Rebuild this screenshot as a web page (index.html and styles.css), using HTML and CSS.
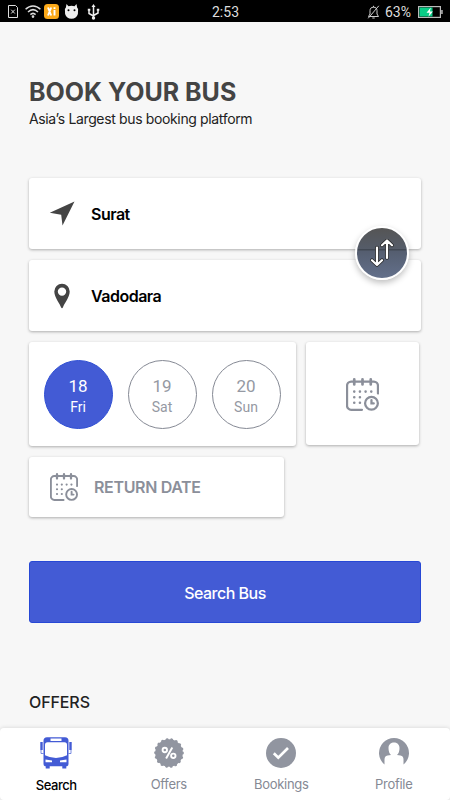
FILE: index.html
```html
<!DOCTYPE html>
<html lang="en">
<head>
    <meta charset="UTF-8">
    <meta name="viewport" content="width=device-width, initial-scale=1.0">
    <title>Book Your Bus</title>
    <link rel="stylesheet" href="styles.css">
</head>
<body>
    <!-- Shared calendar icon -->
    <svg class="defs" width="0" height="0">
        <symbol id="calendar" viewBox="0 0 32 32">
            <g fill="none" stroke="currentColor" stroke-width="2.2" stroke-linecap="round">
                <path d="M15.5 30.800H5a4 4 0 0 1-4-4V7.500a4 4 0 0 1 4-4h22a4 4 0 0 1 4 4V15"/>
                <path stroke-width="2.600" d="M8 1.300v5M16 1.300v5M24 1.300v5"/>
                <circle cx="24.700" cy="24.500" r="6.200"/>
                <path d="M24.700 21.500v3.200h2.200"/>
            </g>
            <path fill="none" stroke="currentColor" stroke-width="2.500" stroke-linecap="round" d="M8 13.200h.01M13.500 13.200h.01M19 13.200h.01M24.500 13.200h.01M8 18.600h.01M13.500 18.600h.01M8 24h.01M13.500 24h.01"/>
        </symbol>
    </svg>

    <div class="status-bar">
        <div class="status-left">
            <svg width="10" height="13" viewBox="0 0 10 13" fill="none" stroke="#ddd"><path d="M.5 .5h7l2 2v10h-9zM3.200 4.700l3.600 3.800M6.800 4.700L3.200 8.500"/></svg>
            <svg class="wifi" width="16" height="13" viewBox="0 0 16 13" fill="none" stroke="#ddd" stroke-width="1.500"><path d="M.6 4.200c4.400-4.400 10.400-4.400 14.800 0M3 7c3.200-3 6.800-3 10 0M5.400 9.600c1.600-1.600 3.600-1.600 5.200 0"/><circle cx="8" cy="11.600" r=".6"/></svg>
            <svg class="app" width="15" height="15" viewBox="0 0 15 15"><rect width="15" height="15" rx="3.500" fill="#fba919"/><path d="M4 3.500l3.200 8M7.200 3.500l-3.200 8M10.500 6v5.500M10.500 3.300v1.600" stroke="#fff" stroke-width="1.900"/></svg>
            <svg class="cat" width="15" height="15" viewBox="0 0 15 15"><path d="M2.500 0l2 2.200q3-.8 6 0L12.500 0l.6 3.500 1 1.500-.2 5q-1.400 4.700-6.400 4.700T1.100 10L.9 5l1-1.500z" fill="#eee"/><circle cx="4.500" cy="6.200" r="1" fill="#000"/><circle cx="10.500" cy="6.200" r="1" fill="#000"/></svg>
            <svg class="usb" width="13" height="16" viewBox="0 0 13 16" fill="none" stroke="#eee" stroke-width="1.500"><path d="M6.500 2v11.500M6.500 12L2 9.500V6M6.500 11.500L11 9V5.500"/><path d="M6.500 0l2 3h-4z" fill="#eee" stroke="none"/><circle cx="6.500" cy="14" r="1.700" fill="#eee" stroke="none"/><path d="M.8 4.800h2.500v2H.8zM9.800 4.800h2.500v2H9.800z" fill="#eee" stroke="none"/></svg>
        </div>
        <span class="time">2:53</span>
        <div class="status-right">
            <svg width="13" height="14" viewBox="0 0 13 14" fill="none" stroke="#ccc"><path d="M1.500 11.500h10L10 9V5.500C10 3.500 8.800 2.200 6.500 2.200S3 3.500 3 5.500V9zM5.300 13h2.400M11.800 .8L1.200 13.300M6.500 .8v1.400"/></svg>
            <span class="percent">63%</span>
            <svg width="25" height="12" viewBox="0 0 25 12"><rect x=".6" y=".6" width="21.800" height="10.800" fill="#000" stroke="#bbb" stroke-width="1.200"/><path d="M1.500 1.500h13v9h-13z" fill="#08cc86"/><path d="M23.200 4h1.500v4h-1.500z" fill="#bbb"/><path d="M12.800 1.500L8.500 6.700h3l-1 4 4.400-5.300h-3z" fill="#fff"/></svg>
        </div>
    </div>

    <main>
        <h1>BOOK YOUR BUS</h1>
        <p class="subtitle">Asia’s Largest bus booking platform</p>

        <div class="route">
            <div class="card place">
                <svg width="26" height="26" viewBox="0 0 26 26"><path d="M25.500 .5L.8 11.800l11.400 2L13.500 24.500z" fill="#444"/></svg>
                <span class="from">Surat</span>
            </div>
            <div class="card place">
                <svg width="26" height="26" viewBox="0 0 26 26"><path fill="#444" fill-rule="evenodd" d="M13 .8a7.700 7.700 0 0 0-7.700 7.700C5.300 14.500 11.200 21 12 24.300q1 1.700 2 0C14.800 21 20.700 14.500 20.700 8.500A7.700 7.700 0 0 0 13 .8zm0 3.600a4.200 4.200 0 1 1 0 8.400 4.200 4.200 0 0 1 0-8.400z"/></svg>
                <span class="to">Vadodara</span>
            </div>
            <div class="swap">
                <svg width="24" height="28" viewBox="0 0 24 28" fill="none" stroke-linecap="round" stroke-linejoin="round">
                    <path stroke="#222" stroke-width="3.600" d="M7 8.500V26M2 21.200L7 26l5-4.800M17 19V1.500M12 6.300L17 1.500l5 4.800"/>
                    <path stroke="#fff" stroke-width="2.200" d="M7 8.500V26M2 21.200L7 26l5-4.800M17 19V1.500M12 6.300L17 1.500l5 4.800"/>
                </svg>
            </div>
        </div>

        <div class="date-row">
            <div class="card dates">
                <div class="day active"><span>18</span><small>Fri</small></div>
                <div class="day"><span>19</span><small>Sat</small></div>
                <div class="day"><span>20</span><small>Sun</small></div>
            </div>
            <div class="card picker">
                <svg width="33" height="33"><use href="#calendar"/></svg>
            </div>
        </div>

        <div class="card return">
            <svg width="28" height="28"><use href="#calendar"/></svg>
            <span>RETURN DATE</span>
        </div>

        <button class="search-btn">Search Bus</button>

        <h2>OFFERS</h2>
    </main>

    <nav>
        <a class="tab current">
            <svg width="32" height="32" viewBox="0 0 32 32">
                <path fill="#435bd5" fill-rule="evenodd" d="M7 .3h18q3.500 0 3.500 3.500V27q0 2-1.500 2.300h-.7v2.200h-4v-2.200H9.700v2.200h-4v-2.200H5Q3.500 29 3.500 27V3.800Q3.500.3 7 .3zM10.500 1.500V4h11V1.500zM7.500 5.300Q5 5.300 5 7.800v10.500q11 5.500 22 0V7.800q0-2.500-2.500-2.500zM5.500 22.500v2.700h6.500v-1.700zM26.500 22.500v2.700H20v-1.700z"/>
                <path fill="#435bd5" d="M.3 5h2.400v8H.3zM29.300 5h2.400v8h-2.400z"/>
                <path fill="none" stroke="#435bd5" stroke-width=".7" d="M1 13v3.500h2.500M31 13v3.500h-2.500"/>
            </svg>
            <span>Search</span>
        </a>
        <a class="tab">
            <svg width="32" height="32" viewBox="0 0 32 32">
                <circle cx="16" cy="16" r="13.800" fill="#9195a0"/>
                <circle cx="16" cy="16" r="13.400" fill="none" stroke="#9195a0" stroke-width="3" stroke-linecap="round" stroke-dasharray=".01 4.668"/>
                <g fill="none" stroke="#fff" stroke-width="1.900"><circle cx="11.800" cy="13" r="2.200"/><circle cx="20.300" cy="18.800" r="2.200"/><path d="M19.300 10.500l-6.200 11"/></g>
            </svg>
            <span>Offers</span>
        </a>
        <a class="tab">
            <svg width="32" height="32" viewBox="0 0 32 32"><circle cx="16" cy="16" r="15" fill="#9195a0"/><path d="M8.800 16.200l4.500 4.500 9.700-9.700" fill="none" stroke="#fff" stroke-width="2.700"/></svg>
            <span>Bookings</span>
        </a>
        <a class="tab">
            <svg width="32" height="32" viewBox="0 0 32 32"><path fill="#9195a0" d="M6.500 27.600A15 15 0 1 1 25.500 27.600V22.500q0-3.400-3-3.900l-3.500-.6q2.500-2.200 2.500-7c0-7.300-11-7.300-11 0q0 4.800 2.500 7l-3.500.6q-3 .5-3 3.900z"/></svg>
            <span>Profile</span>
        </a>
    </nav>
</body>
</html>
```
FILE: styles.css
```css
* {
    box-sizing: border-box;
}

body {
    margin: 0;
    height: 800px;
    display: flex;
    flex-direction: column;
    overflow: hidden;
    background-color: #f7f7f7;
    font-family: Inter, sans-serif;
    color: #000;
}

svg {
    display: block;
    flex-shrink: 0;
}

.defs {
    position: absolute;
}

.status-bar {
    display: grid;
    grid-template-columns: 1fr auto 1fr;
    align-items: center;
    height: 22px;
    padding: 0 7px 0 8px;
    background-color: #000;
    color: #ddd;
    font: 14px/22px Roboto, sans-serif;
}

.status-left,
.status-right {
    display: flex;
    align-items: center;
}

.wifi {
    margin-left: 7px;
}

.app {
    margin-left: 3px;
}

.cat {
    margin-left: 5px;
}

.usb {
    margin-left: 8px;
}

.time {
    padding-top: 1px;
}

.status-right {
    justify-content: flex-end;
}

.percent {
    margin: 0 7px 0 5px;
}

main {
    flex: 1;
    padding: 0 29px;
}

h1 {
    margin: 54px 0 0;
    font-size: 25px;
    line-height: 32px;
    font-weight: 700;
    letter-spacing: 0;
    color: #444;
}

.subtitle {
    margin: 1px 0 0;
    font-size: 14px;
    line-height: 20px;
    letter-spacing: -0.36px;
    color: #222;
}

.card {
    display: flex;
    align-items: center;
    background-color: #fff;
    border-radius: 3px;
    box-shadow: 0 1px 3px rgba(0, 0, 0, 0.3);
}

.route {
    position: relative;
    display: flex;
    flex-direction: column;
    gap: 11px;
    margin-top: 49px;
}

.place {
    height: 71px;
    padding-left: 20px;
    gap: 16px;
    font-size: 16px;
    font-weight: 600;
    letter-spacing: -0.5px;
}

/* Sits over the gap between the two places */
.swap {
    position: absolute;
    top: 48px;
    right: 12px;
    display: flex;
    align-items: center;
    justify-content: center;
    width: 54px;
    height: 54px;
    border: 2px solid #fff;
    border-radius: 50%;
    background: linear-gradient(#555, #555c69 42%, #414853 43%, #555e70 47%, #63708b);
    box-shadow: 0 3px 6px rgba(0, 0, 0, 0.25);
}

.date-row {
    display: flex;
    gap: 10px;
    margin-top: 11px;
}

.dates {
    width: 267px;
    height: 104px;
    padding-left: 15px;
    gap: 15px;
}

.day {
    display: flex;
    flex-direction: column;
    align-items: center;
    justify-content: center;
    width: 69px;
    height: 69px;
    padding: 4px 1px 0 0;
    border: 1px solid #858994;
    border-radius: 50%;
    font: 17px/20px Roboto, sans-serif;
    color: #9599a3;
}

.day small {
    margin-top: 1px;
    font-size: 14px;
}

.day.active {
    border-color: #2f4fd3;
    background-color: #435bd5;
    color: #fff;
}

.picker {
    width: 113px;
    height: 103px;
    padding-top: 2px;
    justify-content: center;
    color: #8b8f9a;
}

.return {
    width: 255px;
    height: 60px;
    margin-top: 11px;
    padding-left: 21px;
    gap: 16px;
    font-size: 16px;
    font-weight: 600;
    letter-spacing: -0.35px;
    color: #8b8f9a;
}

.search-btn {
    display: block;
    width: 100%;
    height: 62px;
    margin-top: 44px;
    padding: 2px 0 0;
    border: 1px solid #2748d5;
    border-radius: 3px;
    background-color: #435bd5;
    color: #fff;
    font: 500 16px Inter, sans-serif;
    letter-spacing: -0.5px;
}

h2 {
    margin: 69px 0 0;
    font-size: 16px;
    line-height: 20px;
    font-weight: 500;
    letter-spacing: -0.1px;
    color: #222;
}

nav {
    display: flex;
    height: 72px;
    border-radius: 4px;
    background-color: #fff;
    box-shadow: 0 0 4px rgba(0, 0, 0, 0.15);
}

.tab {
    flex: 1;
    display: flex;
    flex-direction: column;
    align-items: center;
    padding-top: 9px;
    font-size: 13px;
    line-height: 16px;
    letter-spacing: -0.3px;
    color: #858994;
}

.tab span {
    margin-top: 7px;
}

.current {
    color: #000;
    font-weight: 500;
    letter-spacing: -0.45px;
}

.current span {
    margin-top: 8px;
}
```
